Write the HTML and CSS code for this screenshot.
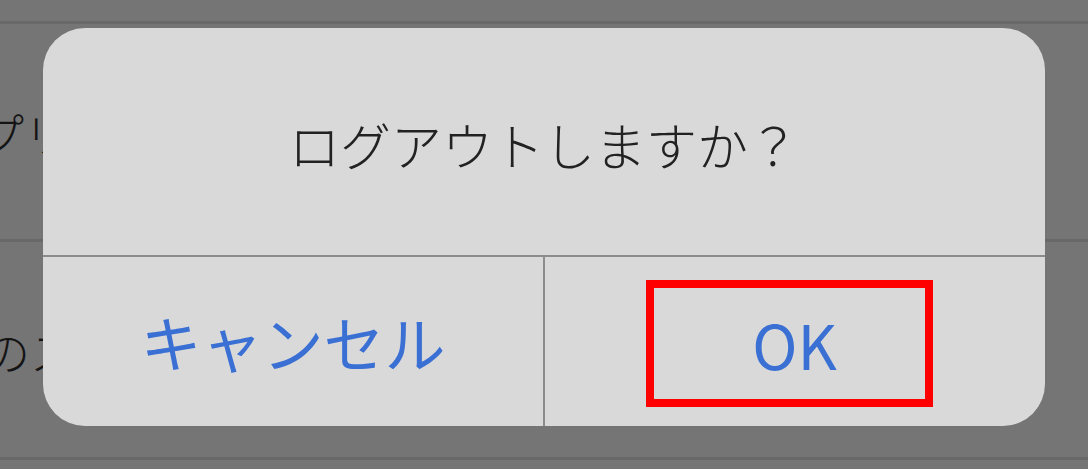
FILE: index.html
```html
<!DOCTYPE html>
<html lang="ja">
<head>
    <meta charset="UTF-8">
    <meta name="viewport" content="width=device-width, initial-scale=1.0">
    <title>ログアウト</title>
    <link rel="stylesheet" href="styles.css">
</head>
<body>
    <!-- page behind the dimmed overlay -->
    <div class="screen">
        <div class="row row-top"></div>
        <div class="row"><span class="row-text row-text-app">プリ</span></div>
        <div class="row"><span class="row-text row-text-no">のス</span></div>
        <div class="row row-bottom"></div>
    </div>

    <div class="alert">
        <div class="alert-title">ログアウトしますか？</div>
        <div class="alert-actions">
            <button class="alert-btn">キャンセル</button>
            <button class="alert-btn alert-btn-ok">
                <span class="highlight">OK</span>
            </button>
        </div>
    </div>
</body>
</html>
```

FILE: styles.css
```css
* {
    margin: 0;
    padding: 0;
    box-sizing: border-box;
}

body {
    font-family: "Noto Sans CJK JP", "Noto Sans", sans-serif;
    background: #757575;
    width: 1088px;
    height: 469px;
    overflow: hidden;
    position: relative;
}

.screen {
    display: flex;
    flex-direction: column;
}

.row {
    height: 218px;
    border-bottom: 3px solid #686868;
    display: flex;
    align-items: center;
    overflow: hidden;
}

.row-top {
    height: 24px;
}

.row-bottom {
    height: 20px;
    border-bottom: none;
}

.row-text {
    font-size: 46px;
    font-weight: 300;
    color: #141414;
    white-space: nowrap;
}

.row-text-app {
    margin-left: -22px;
}

.row-text-no {
    margin-left: -16px;
}

.alert {
    position: absolute;
    top: 28px;
    left: 43px;
    width: 1002px;
    height: 398px;
    background: #d9d9d9;
    border-radius: 42px;
    display: flex;
    flex-direction: column;
    overflow: hidden;
}

.alert-title {
    height: 229px;
    display: flex;
    align-items: center;
    justify-content: center;
    font-size: 51px;
    font-weight: 300;
    color: #222;
    padding-top: 4px;
    border-bottom: 2px solid #8c8c8c;
}

.alert-actions {
    flex: 1;
    display: flex;
}

.alert-btn {
    flex: 1;
    border: none;
    background: transparent;
    font-family: inherit;
    font-size: 61px;
    color: #3a6fd4;
    display: flex;
    align-items: center;
    justify-content: center;
}

.alert-btn + .alert-btn {
    border-left: 2px solid #8c8c8c;
}

.highlight {
    width: 287px;
    height: 127px;
    border: 8px solid #ff0000;
    display: flex;
    align-items: center;
    justify-content: center;
    padding-left: 10px;
    margin-right: 11px;
    margin-top: 4px;
}
```
